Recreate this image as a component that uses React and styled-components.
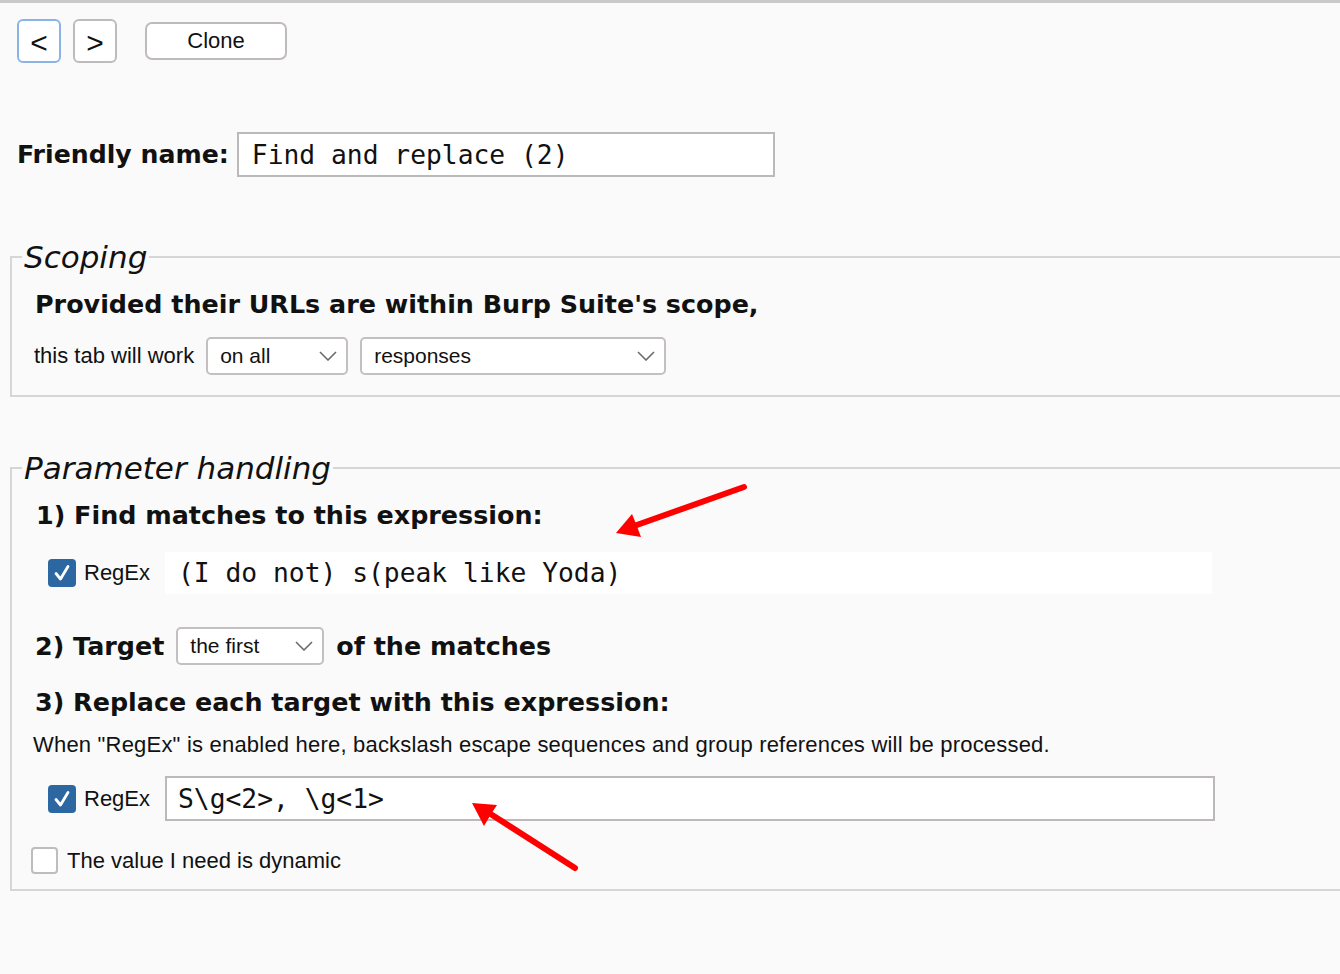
import React from 'react';
import styled, { createGlobalStyle } from 'styled-components';

const GlobalStyle = createGlobalStyle`
    body {
        margin: 0;
        background: #fafafa;
        overflow: hidden;
        font-family: "Liberation Sans", Arial, sans-serif;
        color: #111;
    }
`

const ChevronDown = () => (
    <svg width="18" height="10" viewBox="0 0 18 10">
        <polyline points="1,1 9,9 17,1" fill="none" stroke="#6b6b6b" strokeWidth="1.6" />
    </svg>
);

const CheckMark = () => (
    <svg width="18" height="18" viewBox="0 0 18 18">
        <polyline points="3,9.5 7.5,15 15,2.5" fill="none" stroke="#fff" strokeWidth="2.8" strokeLinecap="round" strokeLinejoin="round" />
    </svg>
);

const Dropdown = ({ value, width }) => (
    <Select $width={width}>
        <span>{value}</span>
        <ChevronDown />
    </Select>
);

const Checkbox = ({ checked }) => (
    <Box $checked={checked}>{checked && <CheckMark />}</Box>
);

const App = () => {
    return (
        <Page>
            <GlobalStyle />
            <Toolbar>
                <NavButton $focused>&lt;</NavButton>
                <NavButton>&gt;</NavButton>
                <CloneButton>Clone</CloneButton>
            </Toolbar>

            <NameRow>
                <BoldLabel>Friendly name:</BoldLabel>
                <NameInput>Find and replace (2)</NameInput>
            </NameRow>

            <Group $top={63}>
                <Legend>Scoping</Legend>
                <GroupBody $bottom={20}>
                    <Heading $indent={4} $top={14}>Provided their URLs are within Burp Suite's scope,</Heading>
                    <Row $indent={3} $top={17}>
                        <Text>this tab will work</Text>
                        <Dropdown value="on all" width={142} />
                        <Dropdown value="responses" width={306} />
                    </Row>
                </GroupBody>
            </Group>

            <Group $top={54}>
                <Legend>Parameter handling</Legend>
                <GroupBody $bottom={15}>
                    <Heading $indent={5} $top={14}>1) Find matches to this expression:</Heading>
                    <Row $indent={17} $top={21}>
                        <CheckLabel>
                            <Checkbox checked />
                            <Text>RegEx</Text>
                        </CheckLabel>
                        <ExprField $width={1047} $height={42}>(I do not) s(peak like Yoda)</ExprField>
                    </Row>
                    <Row $indent={4} $top={33}>
                        <Heading as="span">2) Target</Heading>
                        <Dropdown value="the first" width={148} />
                        <Heading as="span">of the matches</Heading>
                    </Row>
                    <Heading $indent={4} $top={21}>3) Replace each target with this expression:</Heading>
                    <Note>When "RegEx" is enabled here, backslash escape sequences and group references will be processed.</Note>
                    <Row $indent={17} $top={19}>
                        <CheckLabel>
                            <Checkbox checked />
                            <Text>RegEx</Text>
                        </CheckLabel>
                        <ExprField $width={1050} $height={45} $bordered>S\g&lt;2&gt;, \g&lt;1&gt;</ExprField>
                    </Row>
                    <Row $indent={0} $top={26} $gap={9}>
                        <Checkbox />
                        <Text>The value I need is dynamic</Text>
                    </Row>
                </GroupBody>
            </Group>

            <Arrows width="1340" height="974" viewBox="0 0 1340 974">
                <line x1="744" y1="487" x2="634" y2="526" stroke="#ff0000" strokeWidth="6" strokeLinecap="round" />
                <polygon points="616,533 641,537 636.7,525.6 632,514" fill="#ff0000" />
                <line x1="575" y1="868" x2="489" y2="813" stroke="#ff0000" strokeWidth="6" strokeLinecap="round" />
                <polygon points="472,803 497,805 490.6,814.7 484,826" fill="#ff0000" />
            </Arrows>
        </Page>
    );
};

const Page = styled.div`
    position: relative;
    min-height: 971px;
    border-top: 3px solid #c9c9c9;
`
const Toolbar = styled.div`
    display: flex;
    align-items: center;
    gap: 12px;
    padding: 16px 0 0 17px;
`
const NavButton = styled.div`
    width: 44px;
    height: 44px;
    box-sizing: border-box;
    display: flex;
    align-items: center;
    justify-content: center;
    border: 2px solid ${p => p.$focused ? '#8cb3e6' : '#bfbbbd'};
    border-radius: 6px;
    background: #fff;
    font-size: 30px;
    padding-top: 3px;
`
const CloneButton = styled.div`
    width: 142px;
    height: 38px;
    box-sizing: border-box;
    margin-left: 16px;
    display: flex;
    align-items: center;
    justify-content: center;
    border: 2px solid #bfbbbd;
    border-radius: 7px;
    background: #fff;
    font-size: 22px;
`
const NameRow = styled.div`
    display: flex;
    align-items: center;
    gap: 8px;
    margin-top: 69px;
    padding-left: 17px;
`
const BoldLabel = styled.span`
    font-family: "DejaVu Sans", sans-serif;
    font-weight: bold;
    font-size: 25.2px;
    white-space: nowrap;
`
const NameInput = styled.div`
    width: 538px;
    height: 45px;
    box-sizing: border-box;
    display: flex;
    align-items: center;
    padding-left: 13px;
    border: 2px solid #bdb9bb;
    background: #fff;
    font-family: "DejaVu Sans Mono", monospace;
    font-size: 26.3px;
    white-space: pre;
`
const Group = styled.fieldset`
    margin: ${p => p.$top}px 0 0 10px;
    width: 1400px;
    padding: 0;
    border: 2px solid #d6d6d6;
    border-right: none;
`
const Legend = styled.legend`
    margin-left: 10px;
    padding: 0 2px;
    font-family: "DejaVu Sans", sans-serif;
    font-style: italic;
    font-size: 31px;
    line-height: 34px;
`
const GroupBody = styled.div`
    padding: 0 0 ${p => p.$bottom}px 19px;
`
const Heading = styled.div`
    margin: ${p => p.$top || 0}px 0 0 ${p => p.$indent || 0}px;
    font-family: "DejaVu Sans", sans-serif;
    font-weight: bold;
    font-size: 25.4px;
    line-height: 32px;
    white-space: nowrap;
`
const Row = styled.div`
    display: flex;
    align-items: center;
    gap: ${p => p.$gap ?? 12}px;
    margin: ${p => p.$top}px 0 0 ${p => p.$indent}px;
`
const Text = styled.span`
    font-size: 22px;
    line-height: 24px;
`
const Note = styled.div`
    margin: 15px 0 0 2px;
    font-size: 22px;
    line-height: 24px;
    letter-spacing: 0.2px;
`
const Select = styled.div`
    width: ${p => p.$width}px;
    height: 38px;
    box-sizing: border-box;
    display: flex;
    align-items: center;
    justify-content: space-between;
    padding: 0 9px 0 12px;
    border: 2px solid #c4c0c2;
    border-radius: 5px;
    background: #fff;
    font-size: 21px;
`
const CheckLabel = styled.div`
    width: 105px;
    display: flex;
    align-items: center;
    gap: 8px;
`
const Box = styled.div`
    width: ${p => p.$checked ? 28 : 27}px;
    height: ${p => p.$checked ? 28 : 27}px;
    box-sizing: border-box;
    display: flex;
    align-items: center;
    justify-content: center;
    border-radius: 4px;
    background: ${p => p.$checked ? '#2c67a2' : '#fff'};
    border: ${p => p.$checked ? 'none' : '2px solid #bdbdbd'};
`
const ExprField = styled.div`
    width: ${p => p.$width}px;
    height: ${p => p.$height}px;
    box-sizing: border-box;
    display: flex;
    align-items: center;
    padding-left: ${p => p.$bordered ? 11 : 13}px;
    background: #fff;
    border: ${p => p.$bordered ? '2px solid #bdb9bb' : 'none'};
    font-family: "DejaVu Sans Mono", monospace;
    font-size: 26.3px;
    white-space: pre;
`
const Arrows = styled.svg`
    position: absolute;
    top: -3px;
    left: 0;
    pointer-events: none;
`

export default App;
